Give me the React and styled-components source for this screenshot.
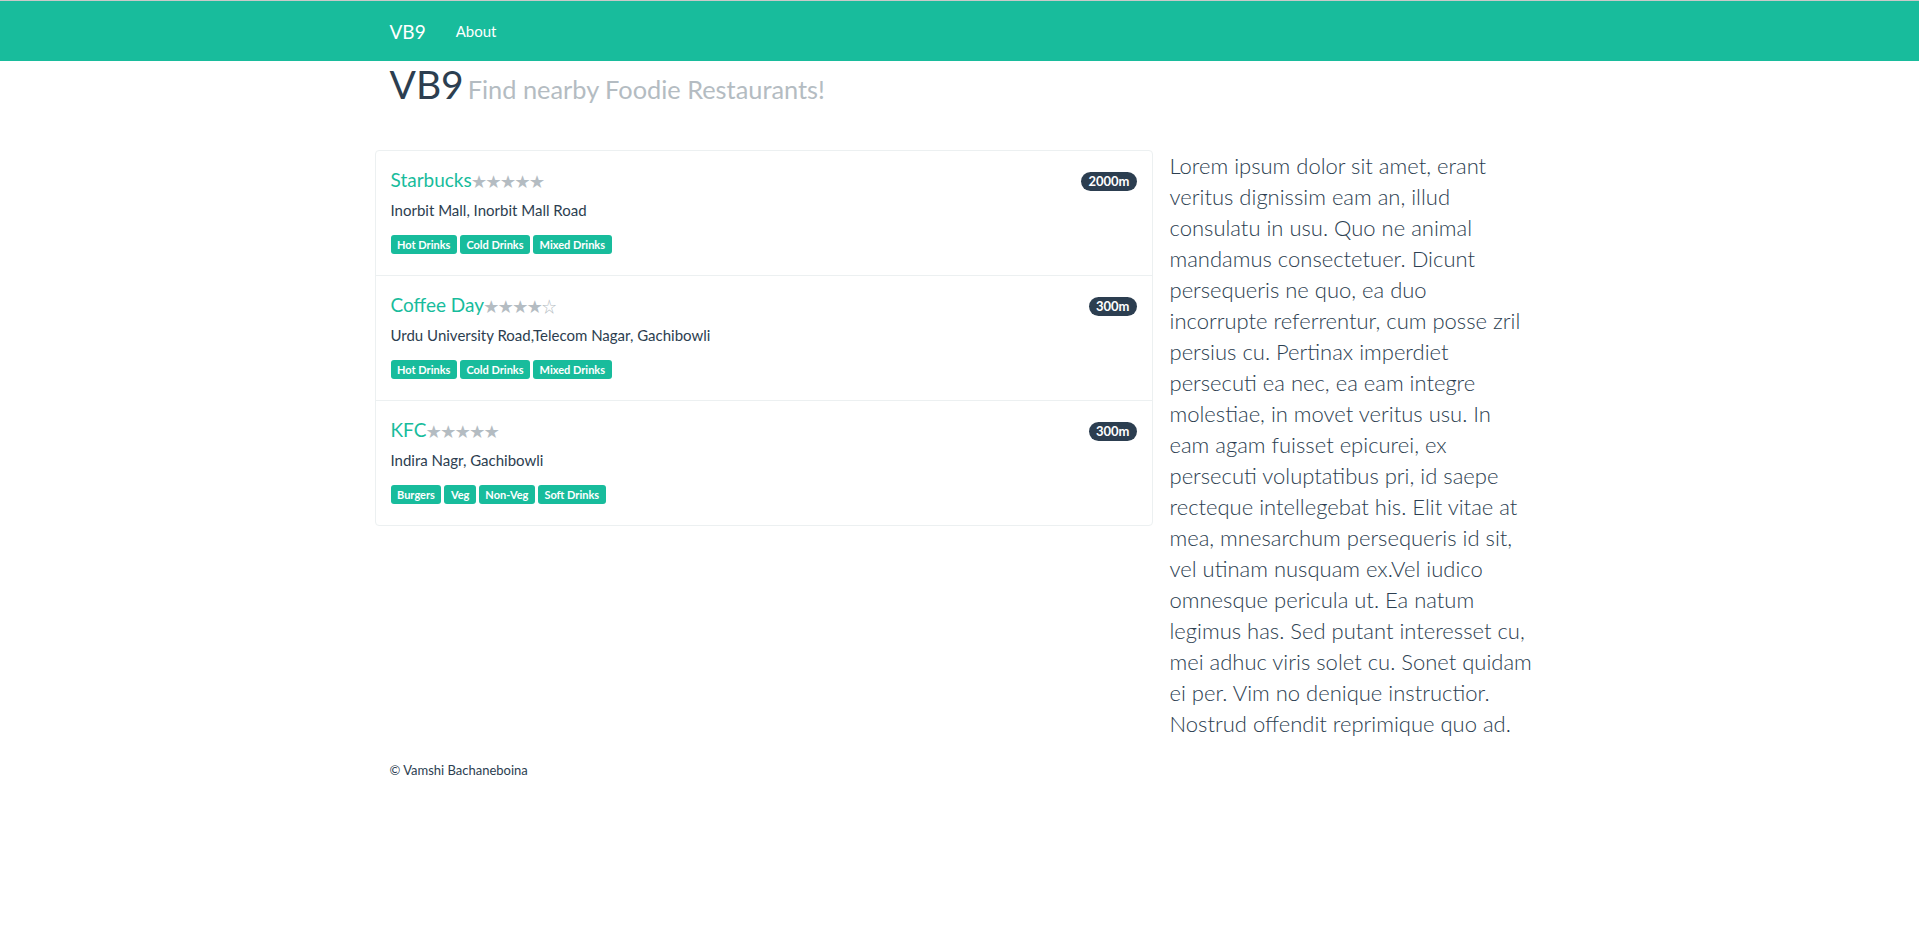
import React from "react";
import styled, { createGlobalStyle } from "styled-components";

const COLOR = {
  TEAL: "#18bc9c",
  NAVY: "#2c3e50",
  MUTED: "#b4bcc2",
  LINE: "#ecf0f1",
};

const restaurants = [
  {
    name: "Starbucks",
    rating: 5,
    distance: "2000m",
    address: "Inorbit Mall, Inorbit Mall Road",
    tags: ["Hot Drinks", "Cold Drinks", "Mixed Drinks"],
  },
  {
    name: "Coffee Day",
    rating: 4,
    distance: "300m",
    address: "Urdu University Road,Telecom Nagar, Gachibowli",
    tags: ["Hot Drinks", "Cold Drinks", "Mixed Drinks"],
  },
  {
    name: "KFC",
    rating: 5,
    distance: "300m",
    address: "Indira Nagr, Gachibowli",
    tags: ["Burgers", "Veg", "Non-Veg", "Soft Drinks"],
  },
];

// line breaks kept as in the original page
const lorem = [
  "Lorem ipsum dolor sit amet, erant",
  "veritus dignissim eam an, illud",
  "consulatu in usu. Quo ne animal",
  "mandamus consectetuer. Dicunt",
  "persequeris ne quo, ea duo",
  "incorrupte referrentur, cum posse zril",
  "persius cu. Pertinax imperdiet",
  "persecuti ea nec, ea eam integre",
  "molestiae, in movet veritus usu. In",
  "eam agam fuisset epicurei, ex",
  "persecuti voluptatibus pri, id saepe",
  "recteque intellegebat his. Elit vitae at",
  "mea, mnesarchum persequeris id sit,",
  "vel utinam nusquam ex.Vel iudico",
  "omnesque pericula ut. Ea natum",
  "legimus has. Sed putant interesset cu,",
  "mei adhuc viris solet cu. Sonet quidam",
  "ei per. Vim no denique instructior.",
  "Nostrud offendit reprimique quo ad.",
].join("\n");

export default function App() {
  return (
    <>
      <GlobalStyle />
      <Navbar>
        <Container>
          <Brand>VB9</Brand>
          <NavLink>About</NavLink>
        </Container>
      </Navbar>
      <Container>
        <Title>
          VB9 <small>Find nearby Foodie Restaurants!</small>
        </Title>
        <Row>
          <LeftCol>
            <ListGroup>
              {restaurants.map((item) => (
                <ListItem key={item.name}>
                  <ItemHead>
                    <ItemName>
                      {item.name}
                      <Stars>
                        {"★".repeat(item.rating)}
                        {"☆".repeat(5 - item.rating)}
                      </Stars>
                    </ItemName>
                    <Badge>{item.distance}</Badge>
                  </ItemHead>
                  <Address>{item.address}</Address>
                  <Tags>
                    {item.tags.map((t) => (
                      <Tag key={t}>{t}</Tag>
                    ))}
                  </Tags>
                </ListItem>
              ))}
            </ListGroup>
          </LeftCol>
          <RightCol>
            <Lead>{lorem}</Lead>
          </RightCol>
        </Row>
        <Footer>© Vamshi Bachaneboina</Footer>
      </Container>
    </>
  );
}

const GlobalStyle = createGlobalStyle`
  body {
    margin: 0;
    background: #ffffff;
    font-family: Lato, "Helvetica Neue", Helvetica, Arial, sans-serif;
    font-size: 15px;
    line-height: 1.42857;
    color: ${COLOR.NAVY};
  }
  * { box-sizing: border-box; }
`;

const Navbar = styled.nav`
  height: 61px;
  border-top: 1px solid #c9c9c9;
  background-color: ${COLOR.TEAL};
`;

const Container = styled.div`
  width: 1170px;
  margin: 0 auto;
  padding: 0 15px;
  display: flex;
  flex-direction: column;
  ${Navbar} & {
    flex-direction: row;
    height: 60px;
    align-items: stretch;
  }
`;

const Brand = styled.a`
  display: flex;
  align-items: center;
  padding: 1px 15px 0 0;
  font-size: 19px;
  color: #ffffff;
`;

const NavLink = styled.a`
  display: flex;
  align-items: center;
  padding: 2px 15px 0;
  font-size: 15px;
  color: #ffffff;
`;

const Title = styled.h1`
  margin: 2px 0 0;
  font-size: 39px;
  font-weight: 400;
  line-height: 1.1;
  color: ${COLOR.NAVY};
  small {
    margin-left: -6px;
    font-size: 65%;
    font-weight: 400;
    color: ${COLOR.MUTED};
  }
`;

const Row = styled.div`
  display: flex;
  margin: 44px -15px 0;
`;

const LeftCol = styled.div`
  width: 780px;
  padding-right: 2px;
`;

const RightCol = styled.div`
  width: 390px;
  padding: 0 15px;
`;

const ListGroup = styled.div`
  border: 1px solid ${COLOR.LINE};
  border-radius: 4px;
`;

const ListItem = styled.div`
  height: 124px;
  padding: 10px 15px;
  & + & {
    border-top: 1px solid ${COLOR.LINE};
    height: 125px;
  }
`;

const ItemHead = styled.div`
  display: flex;
  justify-content: space-between;
  align-items: center;
  margin-top: 9px;
  height: 21px;
`;

const ItemName = styled.h4`
  margin: 0;
  font-size: 19px;
  font-weight: 400;
  line-height: 21px;
  color: ${COLOR.TEAL};
`;

const Stars = styled.span`
  font-family: "Noto Sans CJK SC", "DejaVu Sans", sans-serif;
  font-size: 14.5px;
  color: ${COLOR.MUTED};
`;

const Badge = styled.span`
  display: inline-block;
  padding: 3px 7px;
  font-size: 13px;
  font-weight: 700;
  line-height: 1;
  color: #ffffff;
  background-color: ${COLOR.NAVY};
  border-radius: 10px;
  margin-top: 2px;
`;

const Address = styled.p`
  margin: 9px 0 0;
  font-size: 15px;
  line-height: 21px;
`;

const Tags = styled.div`
  display: flex;
  gap: 3px;
  margin-top: 14px;
`;

const Tag = styled.span`
  display: inline-block;
  height: 19px;
  padding: 0 6.5px;
  font-size: 11px;
  font-weight: 700;
  line-height: 19px;
  color: #ffffff;
  background-color: ${COLOR.TEAL};
  border-radius: 3px;
`;

const Lead = styled.p`
  margin: 0;
  font-size: 22px;
  font-weight: 300;
  line-height: 31px;
  white-space: pre;
  color: ${COLOR.NAVY};
`;

const Footer = styled.footer`
  margin-top: 23px;
  font-size: 13px;
  line-height: 17px;
`;
